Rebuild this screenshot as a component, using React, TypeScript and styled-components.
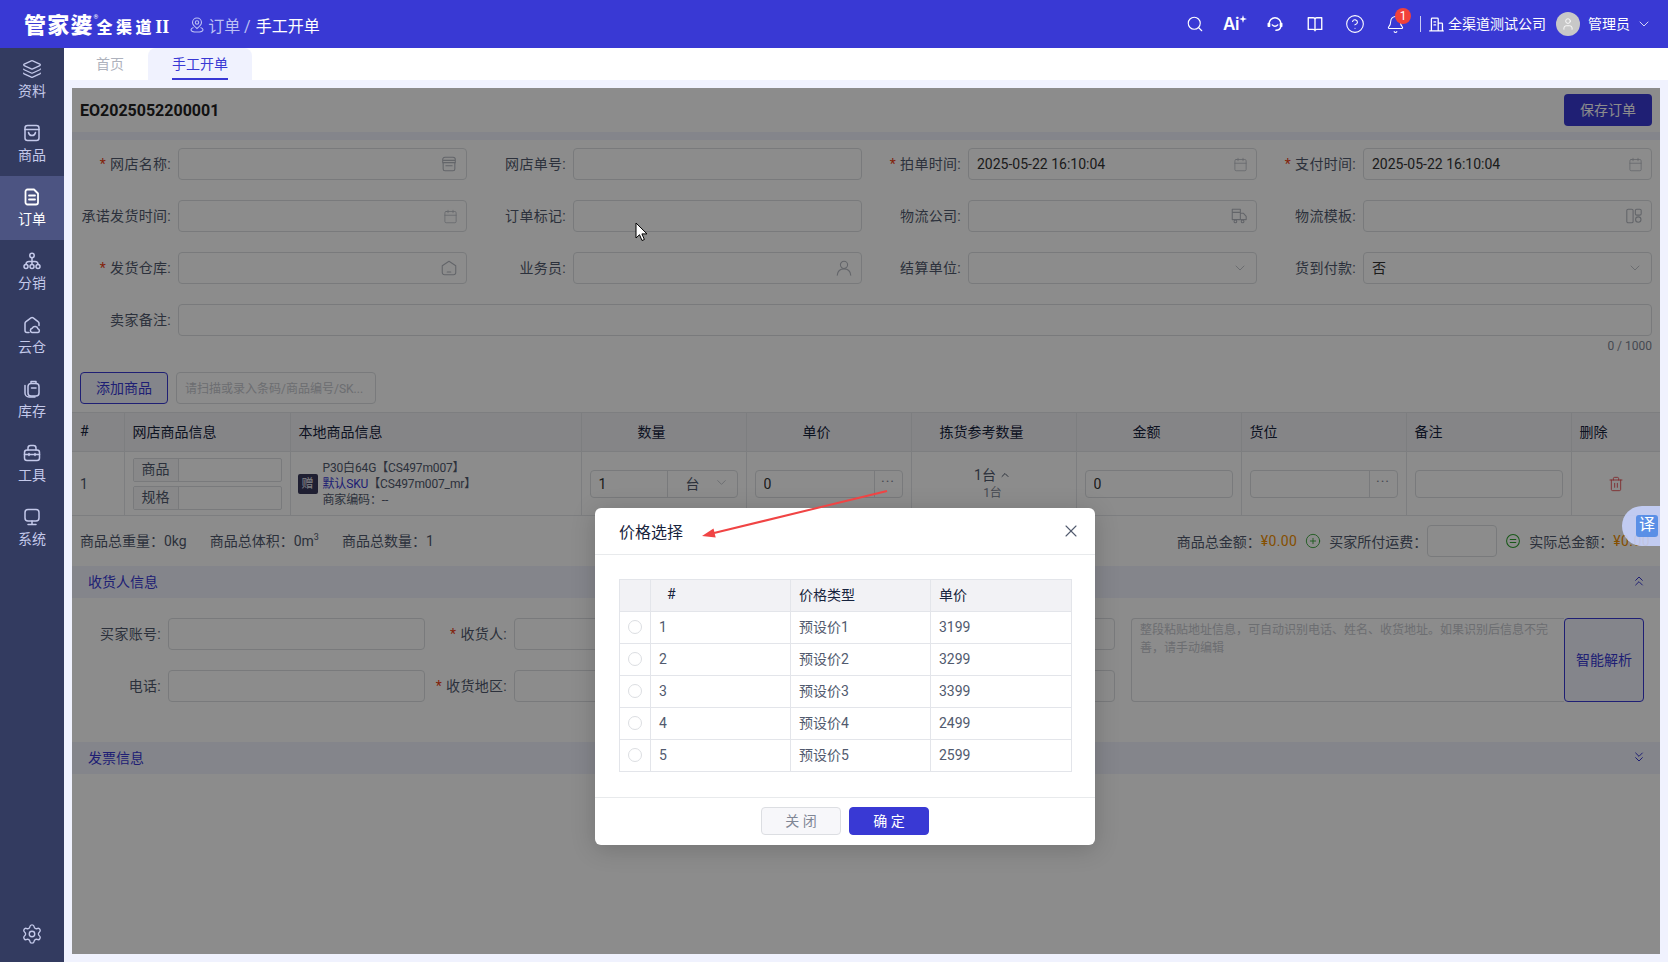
import React from "react";
import styled, { createGlobalStyle } from "styled-components";
import {
  Bell,
  Calendar,
  ChevronDown,
  ChevronUp,
  ChevronsDown,
  ChevronsUp,
  CircleHelp,
  CirclePlus,
  Layers,
  Search,
  Settings,
  Trash2,
  User,
  X,
} from "lucide-react";

const PRIMARY = "#3939d4";
const FONT = `Roboto, "Noto Sans CJK SC", sans-serif`;

const GlobalStyle = createGlobalStyle`
  html, body { margin: 0; padding: 0; height: 100%; background: #f0f2fe; }
  * { box-sizing: border-box; }
  body, input, textarea, button { font-family: ${FONT}; }
`;

const Page = styled.div`
  position: relative;
  width: 1668px;
  height: 962px;
  overflow: hidden;
  display: flex;
  flex-direction: column;
  font-size: 14px;
  color: #515a6e;
`;

/* top bar */
const TopBar = styled.header`
  flex: 0 0 48px;
  display: flex;
  align-items: center;
  padding-left: 24px;
  background: ${PRIMARY};
  color: #fff;
`;
const LogoMain = styled.span`
  margin-top: 3px;
  font-size: 22px;
  font-weight: 900;
  letter-spacing: 1.2px;
  line-height: 24px;
`;
const LogoMark = styled.span`
  align-self: flex-start;
  margin: 13px 0 0 0;
  width: 3px;
  font-size: 6px;
  line-height: 8px;
`;
const LogoSub = styled.span`
  margin: 6px 0 0 0;
  font-size: 16px;
  font-weight: 900;
  letter-spacing: 3.5px;
  line-height: 20px;
  white-space: nowrap;
`;
const LogoRoman = styled.span`
  font-family: "Liberation Serif", serif;
  font-size: 18px;
  letter-spacing: 0;
`;
const Crumbs = styled.div`
  display: flex;
  align-items: center;
  margin: 2px 0 0 21px;
  font-size: 16px;
  color: #bcc0f4;
  & svg { margin-right: 4px; }
  & b { font-weight: 400; color: #fff; margin-left: 5px; }
`;
const TopRight = styled.div`
  margin-left: auto;
  display: flex;
  align-items: center;
  padding-right: 16px;
`;
const TopIcon = styled.span`
  position: relative;
  width: 40px;
  height: 32px;
  display: flex;
  align-items: center;
  justify-content: center;
`;
const AiText = styled.span`
  font-family: Inter, sans-serif;
  font-size: 17px;
  font-weight: 600;
  letter-spacing: -0.5px;
`;
const AiSpark = styled.svg`
  align-self: flex-start;
  margin: 7px 0 0 0;
`;
const Badge = styled.span`
  position: absolute;
  left: 20px;
  top: 0;
  width: 16px;
  height: 16px;
  border-radius: 50%;
  background: #f2413a;
  color: #fff;
  font-size: 12px;
  line-height: 16px;
  text-align: center;
`;
const Divider = styled.span`
  width: 1px;
  height: 16px;
  margin: 0 7px 0 5px;
  background: #c9cbf5;
`;
const Company = styled.span`
  margin: 0 10px 0 3px;
  padding-bottom: 2px;
  white-space: nowrap;
`;
const Avatar = styled.span`
  width: 24px;
  height: 24px;
  border-radius: 50%;
  background: #c8c8c8;
  display: flex;
  align-items: center;
  justify-content: center;
  margin-right: 8px;
`;
const UserName = styled.span`
  margin-right: 6px;
  padding-bottom: 2px;
  white-space: nowrap;
`;

/* sidebar */
const Body = styled.div`
  flex: 1;
  display: flex;
  min-height: 0;
`;
const Sidebar = styled.nav`
  flex: 0 0 64px;
  display: flex;
  flex-direction: column;
  background: #333b60;
`;
const NavItem = styled.a<{ $active?: boolean }>`
  height: 64px;
  display: flex;
  flex-direction: column;
  align-items: center;
  padding-top: 11px;
  gap: 2px;
  background: ${(p) => (p.$active ? "#4c5482" : "transparent")};
  color: ${(p) => (p.$active ? "#fff" : "#c4c9ea")};
  font-size: 14px;
  line-height: 20px;
  & svg { display: block; }
`;
const GearSlot = styled.div`
  margin-top: auto;
  height: 42px;
  display: flex;
  justify-content: center;
  color: #c4c9ea;
  padding-top: 3px;
`;

/* tabs */
const Main = styled.main`
  flex: 1;
  min-width: 0;
  display: flex;
  flex-direction: column;
`;
const Tabs = styled.div`
  flex: 0 0 32px;
  display: flex;
  padding-left: 8px;
  background: #fff;
`;
const Tab = styled.div<{ $active?: boolean }>`
  width: ${(p) => (p.$active ? 104 : 76)}px;
  display: flex;
  justify-content: center;
  border-radius: 8px 8px 0 0;
  background: ${(p) => (p.$active ? "#f0f2fe" : "#fff")};
  color: ${(p) => (p.$active ? PRIMARY : "#aeb2bd")};
  & span {
    height: 32px;
    line-height: 32px;
    border-bottom: ${(p) => (p.$active ? `2px solid ${PRIMARY}` : "none")};
  }
`;
const Content = styled.div`
  flex: 1;
  padding: 8px;
  min-height: 0;
`;
const Panel = styled.section`
  position: relative;
  height: 866px;
  background: #fff;
  overflow: hidden;
`;

/* order header */
const OrderHead = styled.div`
  height: 44px;
  display: flex;
  align-items: center;
  justify-content: space-between;
  padding: 0 8px;
`;
const OrderNo = styled.h1`
  margin: 0;
  font-size: 16px;
  font-weight: 700;
  color: #222;
`;
const PrimaryBtn = styled.button`
  width: 88px;
  height: 32px;
  border: none;
  border-radius: 4px;
  background: ${PRIMARY};
  color: #fff;
  font-size: 14px;
  padding: 0 0 2px;
`;
const Strip = styled.div`
  height: 8px;
  background: #f0f2fe;
`;

/* form */
const FormGrid = styled.div`
  display: grid;
  grid-template-columns: repeat(4, 387px);
  gap: 20px 8px;
  padding: 8px 8px 0;
`;
const Field = styled.label<{ $span?: boolean; $label?: number }>`
  display: grid;
  grid-template-columns: ${(p) => p.$label ?? 98}px 1fr;
  align-items: center;
  ${(p) => (p.$span ? "grid-column: 1 / -1;" : "")}
`;
const FieldName = styled.span`
  text-align: right;
  padding: 0 7px 2px 0;
  letter-spacing: 0.3px;
  white-space: nowrap;
  color: #515a6e;
  & i {
    font-style: normal;
    color: #ed4014;
    margin-right: 4px;
  }
`;
const InputBox = styled.div<{ $h?: number; $w?: number }>`
  display: flex;
  align-items: center;
  height: ${(p) => p.$h ?? 32}px;
  ${(p) => (p.$w ? `width: ${p.$w}px;` : "")}
  border: 1px solid #dcdee2;
  border-radius: 4px;
  background: #fff;
  color: #b4b8c0;
  padding-right: 8px;
`;
const Plain = styled.input<{ $raised?: boolean }>`
  flex: 1;
  min-width: 0;
  width: 100%;
  height: 100%;
  border: none;
  outline: none;
  background: transparent;
  padding: 0 0 ${(p) => (p.$raised ? 3 : 0)}px 8px;
  font-size: 14px;
  color: #333;
  &::placeholder {
    color: #c5c8ce;
    font-size: 12px;
  }
`;
const Counter = styled.div`
  padding: 2px 8px 0;
  text-align: right;
  font-size: 12px;
  line-height: 16px;
  color: #808695;
`;
const Toolbar = styled.div`
  display: flex;
  gap: 8px;
  padding: 18px 8px 8px;
`;
const OutlineBtn = styled.button`
  width: 88px;
  height: 32px;
  padding: 0 0 2px;
  border: 1px solid ${PRIMARY};
  border-radius: 4px;
  background: #f0f2fe;
  color: ${PRIMARY};
  font-size: 14px;
`;

/* goods table */
const Grid = styled.table`
  width: 100%;
  table-layout: fixed;
  border-collapse: collapse;
`;
const Col = styled.col<{ $w: number }>`
  width: ${(p) => p.$w}px;
`;
const Th = styled.th<{ $center?: boolean }>`
  height: 39px;
  padding: ${(p) => (p.$center ? "0 24px 2px 0" : "0 8px 2px")};
  text-align: ${(p) => (p.$center ? "center" : "left")};
  font-weight: 400;
  color: #17233d;
  background: #f2f2f6;
  border: 1px solid #e3e5ea;
  border-left: none;
  &:last-child { border-right: none; }
`;
const Td = styled.td`
  height: 64px;
  padding: 0 8px;
  color: #515a6e;
  border: 1px solid #e3e5ea;
  border-left: none;
  &:last-child { border-right: none; }
`;
const AttrStack = styled.div`
  display: flex;
  flex-direction: column;
  gap: 4px;
`;
const Attr = styled.div`
  display: flex;
  height: 24px;
  border: 1px solid #dcdee2;
  border-radius: 2px;
`;
const AttrName = styled.span`
  flex: 0 0 45px;
  background: #f7f7fa;
  border-right: 1px solid #dcdee2;
  text-align: center;
  line-height: 20px;
`;
const GoodsCell = styled.div`
  display: flex;
  align-items: center;
  gap: 5px;
  margin-left: -1px;
  font-size: 12px;
  line-height: 16px;
  letter-spacing: -0.15px;
  white-space: nowrap;
`;
const GiftTag = styled.span`
  flex: 0 0 20px;
  height: 20px;
  border-radius: 2px;
  background: #3a3a5c;
  color: #e8e8f0;
  text-align: center;
  line-height: 20px;
`;
const SkuLink = styled.span`
  color: ${PRIMARY};
`;
const Suffix = styled.span`
  flex: 0 0 28px;
  align-self: stretch;
  display: flex;
  align-items: center;
  justify-content: center;
  border-left: 1px solid #dcdee2;
  margin-right: -8px;
  color: #808695;
  letter-spacing: 1px;
  padding-bottom: 3px;
`;
const UnitBox = styled.span`
  flex: 0 0 62px;
  align-self: stretch;
  display: flex;
  align-items: center;
  justify-content: space-between;
  border-left: 1px solid #dcdee2;
  padding: 0 0 2px 18px;
  color: #515a6e;
  & svg { color: #b4b8c0; }
`;
const PickCell = styled.div`
  text-align: center;
  padding-right: 2px;
  line-height: 18px;
  & small {
    display: block;
    font-size: 12px;
    color: #808695;
  }
  & svg { vertical-align: -1px; margin-left: 3px; }
`;
const TrashCell = styled.div`
  display: flex;
  justify-content: center;
  color: #e5484d;
`;

/* totals */
const Totals = styled.div`
  height: 50px;
  display: flex;
  align-items: center;
  padding: 0 8px;
  white-space: nowrap;
  & sup { font-size: 9px; line-height: 0; }
`;
const Stat = styled.span`
  margin-right: 23px;
  padding-bottom: 2px;
`;
const TotalsRight = styled.div`
  margin-left: auto;
  display: flex;
  align-items: center;
  padding-right: 2px;
`;
const Money = styled.span`
  color: #f39000;
  letter-spacing: 0.4px;
`;
const SignBadge = styled.span`
  width: 16px;
  height: 16px;
  margin: 0 8px;
  display: flex;
  align-items: center;
  justify-content: center;
  color: #2ca02c;
`;

/* sections */
const SectionBar = styled.div`
  height: 32px;
  display: flex;
  align-items: center;
  justify-content: space-between;
  padding: 0 13px 2px 16px;
  background: #f0f2fe;
  color: ${PRIMARY};
`;
const Consignee = styled.div`
  height: 144px;
  display: flex;
  padding: 20px 16px 0 8px;
`;
const ConsigneeGrid = styled.div`
  flex: 0 0 1035px;
  height: 84px;
  display: grid;
  grid-template-columns: 345px 338px 336px;
  gap: 20px 8px;
`;
const AddressBox = styled.textarea`
  flex: 0 0 433px;
  margin-left: 16px;
  height: 84px;
  padding: 2px 8px 2px 8px;
  resize: none;
  border: 1px solid #dcdee2;
  border-right: none;
  border-radius: 4px 0 0 4px;
  outline: none;
  font-size: 12px;
  line-height: 18px;
  &::placeholder { color: #c5c8ce; }
`;
const ParseBtn = styled.button`
  flex: 0 0 80px;
  height: 84px;
  padding: 0 0 2px;
  border: 1px solid ${PRIMARY};
  border-radius: 4px;
  background: #f0f2fe;
  color: ${PRIMARY};
  font-size: 14px;
`;

/* dialog */
const Mask = styled.div`
  position: absolute;
  inset: 0;
  background: rgba(0, 0, 0, 0.45);
`;
const Dialog = styled.div`
  position: absolute;
  left: 523px;
  top: 420px;
  width: 500px;
  height: 337px;
  display: flex;
  flex-direction: column;
  border-radius: 6px;
  background: #fff;
  box-shadow: 0 4px 24px rgba(0, 0, 0, 0.18);
`;
const DialogHead = styled.div`
  flex: 0 0 47px;
  display: flex;
  align-items: center;
  justify-content: space-between;
  padding: 0 14px 0 24px;
  border-bottom: 1px solid #e8eaec;
  font-size: 16px;
  color: #17233d;
  & svg { color: #515a6e; }
`;
const DialogBody = styled.div`
  flex: 1;
  padding: 24px 24px 0;
`;
const PriceTable = styled.table`
  width: 452px;
  table-layout: fixed;
  border-collapse: collapse;
`;
const PriceTh = styled.th<{ $indent?: boolean }>`
  height: 32px;
  padding: 0 0 3px ${(p) => (p.$indent ? 16 : 8)}px;
  text-align: left;
  font-weight: 400;
  color: #17233d;
  background: #f2f2f5;
  border: 1px solid #e3e5ea;
`;
const PriceTd = styled.td`
  height: 32px;
  padding: 0 0 1px 8px;
  color: #515a6e;
  border: 1px solid #e3e5ea;
`;
const NameTd = styled(PriceTd)`
  padding-bottom: 3px;
`;
const RadioTd = styled(PriceTd)`
  padding: 0 0 1px;
`;
const Radio = styled.span`
  display: block;
  width: 14px;
  height: 14px;
  margin: 0 auto;
  border: 1px solid #dcdee2;
  border-radius: 50%;
`;
const DialogFoot = styled.div`
  flex: 0 0 48px;
  display: flex;
  justify-content: center;
  gap: 8px;
  padding-top: 9px;
  border-top: 1px solid #e8eaec;
`;
const FootBtn = styled.button<{ $primary?: boolean }>`
  width: 80px;
  height: 28px;
  padding: 0 0 2px;
  border-radius: 4px;
  border: 1px solid ${(p) => (p.$primary ? PRIMARY : "#dcdee2")};
  background: ${(p) => (p.$primary ? PRIMARY : "#f7f7fa")};
  color: ${(p) => (p.$primary ? "#fff" : "#808695")};
  font-size: 14px;
`;

/* floating bits */
const TranslateTab = styled.div`
  position: absolute;
  right: 0;
  top: 418px;
  width: 38px;
  height: 40px;
  display: flex;
  align-items: center;
  padding-left: 14px;
  border-radius: 20px 0 0 20px;
  background: rgba(200, 212, 255, 0.88);
`;
const TranslateGlyph = styled.span`
  width: 22px;
  height: 22px;
  border-radius: 3px;
  background: #5a8fe6;
  color: #fff;
  font-size: 16px;
  line-height: 20px;
  text-align: center;
`;
const ArrowMark = styled.svg`
  position: absolute;
  left: 700px;
  top: 488px;
`;
const Pointer = styled.svg`
  position: absolute;
  left: 635px;
  top: 222px;
`;

const Ico = ({ children, size = 20, sw = 1.5 }: { children: React.ReactNode; size?: number; sw?: number }) => (
  <svg width={size} height={size} viewBox="0 0 20 20" fill="none" stroke="currentColor" strokeWidth={sw} strokeLinecap="round" strokeLinejoin="round">
    {children}
  </svg>
);

const BagIcon = () => (
  <Ico>
    <rect x="3" y="2.500" width="14" height="15" rx="2.500" />
    <path d="M3 6.500h14M6.500 9.500c.4 2 1.700 3 3.500 3s3.100-1 3.500-3" />
  </Ico>
);
const DocIcon = () => (
  <Ico sw={1.8}>
    <path d="M5.500 2.500h6.500l4 4v9a2 2 0 0 1-2 2H5.500a2 2 0 0 1-2-2v-11a2 2 0 0 1 2-2z" />
    <path d="M7 8.500h6M7 12.500h6" />
  </Ico>
);
const TreeIcon = () => (
  <Ico>
    <circle cx="10" cy="4.500" r="2.200" />
    <circle cx="4" cy="15.500" r="2" />
    <circle cx="10" cy="15.500" r="2" />
    <circle cx="16" cy="15.500" r="2" />
    <path d="M10 6.700v6.800M4 13.500c0-2 1-3 3-3h6c2 0 3 1 3 3" />
  </Ico>
);
const CloudHomeIcon = () => (
  <Ico>
    <path d="M7 17.500H5a2 2 0 0 1-2-2V8.500c0-.800.300-1.400 1-1.900l5-3.700c.700-.500 1.500-.500 2.200 0l4.800 3.700c.700.500 1 1.100 1 1.900v2" />
    <path d="M10 17.500a2.200 2.200 0 0 1 .300-4.300 3 3 0 0 1 5.600.600 1.900 1.900 0 0 1 0 3.700z" />
  </Ico>
);
const StockIcon = () => (
  <Ico>
    <rect x="6" y="4.500" width="11" height="12.500" rx="3" />
    <path d="M9 3.500V2.500h5v2M9.500 9h4.500M3 6.500V14a4 4 0 0 0 4 4h6" />
  </Ico>
);
const ToolboxIcon = () => (
  <Ico>
    <rect x="2.500" y="7" width="15" height="10.500" rx="2.500" />
    <path d="M6 7V5a2.500 2.500 0 0 1 2.500-2.500h3A2.500 2.500 0 0 1 14 5v2M2.500 11.500h15M7 10.500v2M13 10.500v2" />
  </Ico>
);
const ScreenIcon = () => (
  <Ico>
    <rect x="3" y="2.500" width="14" height="11.500" rx="3" />
    <path d="M10 14v3.500M6 17.500h8" />
  </Ico>
);
const PinIcon = () => (
  <svg width="14" height="16" viewBox="0 0 14 16" fill="none" stroke="currentColor" strokeWidth="1.100">
    <path d="M7 11.500C4.500 9.500 2.500 7.700 2.500 5.500a4.500 4.500 0 0 1 9 0c0 2.200-2 4-4.500 6z" />
    <circle cx="7" cy="5.500" r="1.700" />
    <path d="M3.500 10.500c-1.500.500-2.500 1.300-2.500 2.200 0 1.200 2.700 2.300 6 2.300s6-1.100 6-2.300c0-.900-1-1.700-2.500-2.200" />
  </svg>
);
const HeadsetIcon = () => (
  <Ico size={18} sw={1.600}>
    <path d="M3.500 11V9.500a6.500 6.500 0 0 1 13 0V11" />
    <path d="M2.500 9.500h1.500v3H2.500zM16 9.500h1.500v3H16z" />
    <path d="M7 11c.8 1 1.800 1.500 3 1.500s2.200-.5 3-1.500" />
    <path d="M16.500 13c-.5 2.500-2.500 4-5.500 4" />
  </Ico>
);
const BookIcon = () => (
  <Ico size={18}>
    <path d="M2.500 3h5.500c1.100 0 2 .900 2 2v12.500c0-1-.900-1.500-2-1.500H2.500zM17.500 3H12c-1.100 0-2 .900-2 2v12.500c0-1 .900-1.500 2-1.500h5.500z" />
  </Ico>
);
const BuildingIcon = () => (
  <Ico size={17}>
    <path d="M2 17.500h16M4 17.500V3.500c0-.600.400-1 1-1h6c.600 0 1 .400 1 1v14M12 8.500h4c.600 0 1 .400 1 1v8M7 7h2M7 10.500h2" />
  </Ico>
);
const StoreIcon = () => (
  <Ico size={18} sw={1.200}>
    <path d="M3.500 9v6.500a2 2 0 0 0 2 2h9a2 2 0 0 0 2-2V9" />
    <path d="M3 8.500V5a2.500 2.500 0 0 1 2.500-2.500h9A2.500 2.500 0 0 1 17 5v3.500zM3 6h14M6.500 12h7" />
  </Ico>
);
const TruckIcon = () => (
  <Ico size={18} sw={1.200}>
    <path d="M2.500 2.500h9v11.500h-9zM2.500 6h9M11.500 7h3.500l3 3.500V14h-6.500" />
    <circle cx="6" cy="16" r="1.500" />
    <circle cx="14" cy="16" r="1.500" />
  </Ico>
);
const LayoutIcon = () => (
  <Ico size={18} sw={1.200}>
    <rect x="2" y="2.500" width="7" height="15" rx="1.500" />
    <rect x="11.500" y="2.500" width="6.500" height="6.500" rx="1.500" />
    <circle cx="14.750" cy="14" r="3" />
  </Ico>
);
const DepotIcon = () => (
  <Ico size={18} sw={1.200}>
    <path d="M2.500 7.500 10 2.500l7.500 5v7.500a2.500 2.500 0 0 1-2.500 2.500H5A2.500 2.500 0 0 1 2.500 15zM8 14.500h4" />
  </Ico>
);
const PersonIcon = () => (
  <Ico size={18} sw={1.200}>
    <circle cx="10" cy="6.500" r="4" />
    <path d="M2.500 18c.500-4.500 3.500-7 7.500-7s7 2.500 7.500 7" />
  </Ico>
);

const NAV = [
  { label: "资料", icon: <Layers size={20} strokeWidth={1.5} /> },
  { label: "商品", icon: <BagIcon /> },
  { label: "订单", icon: <DocIcon />, active: true },
  { label: "分销", icon: <TreeIcon /> },
  { label: "云仓", icon: <CloudHomeIcon /> },
  { label: "库存", icon: <StockIcon /> },
  { label: "工具", icon: <ToolboxIcon /> },
  { label: "系统", icon: <ScreenIcon /> },
];

const CalendarIcon = () => <Calendar size={15} strokeWidth={1.200} />;
const Chevron = () => <ChevronDown size={16} strokeWidth={1.200} />;

type FormField = {
  label: string;
  required?: boolean;
  value?: string;
  suffix?: React.ReactNode;
  raised?: boolean;
};

const FORM_FIELDS: FormField[] = [
  { label: "网店名称:", required: true, suffix: <StoreIcon /> },
  { label: "网店单号:" },
  { label: "拍单时间:", required: true, value: "2025-05-22 16:10:04", suffix: <CalendarIcon /> },
  { label: "支付时间:", required: true, value: "2025-05-22 16:10:04", suffix: <CalendarIcon /> },
  { label: "承诺发货时间:", suffix: <CalendarIcon /> },
  { label: "订单标记:" },
  { label: "物流公司:", suffix: <TruckIcon /> },
  { label: "物流模板:", suffix: <LayoutIcon /> },
  { label: "发货仓库:", required: true, suffix: <DepotIcon /> },
  { label: "业务员:", suffix: <PersonIcon /> },
  { label: "结算单位:", suffix: <Chevron /> },
  { label: "货到付款:", value: "否", suffix: <Chevron />, raised: true },
];

const GOODS_COLS = [52, 166, 291, 165, 165, 165, 165, 165, 165, 89];
const PRICE_COLS = [31, 140, 140, 141];
const PRICES = [
  { id: 1, name: "预设价1", price: "3199" },
  { id: 2, name: "预设价2", price: "3299" },
  { id: 3, name: "预设价3", price: "3399" },
  { id: 4, name: "预设价4", price: "2499" },
  { id: 5, name: "预设价5", price: "2599" },
];

const Label = ({ text, required }: { text: string; required?: boolean }) => (
  <FieldName>
    {required && <i>*</i>}
    {text}
  </FieldName>
);

const App = () => (
  <Page>
    <GlobalStyle />
    <TopBar>
      <LogoMain>管家婆</LogoMain>
      <LogoMark>®</LogoMark>
      <LogoSub>
        全渠道<LogoRoman>II</LogoRoman>
      </LogoSub>
      <Crumbs>
        <PinIcon />
        订单 / <b>手工开单</b>
      </Crumbs>
      <TopRight>
        <TopIcon><Search size={18} strokeWidth={1.500} /></TopIcon>
        <TopIcon>
          <AiText>Ai</AiText>
          <AiSpark width="8" height="8" viewBox="0 0 8 8" fill="currentColor"><path d="M4 0l.9 3.100L8 4l-3.100.9L4 8l-.9-3.100L0 4l3.100-.9z" /></AiSpark>
        </TopIcon>
        <TopIcon><HeadsetIcon /></TopIcon>
        <TopIcon><BookIcon /></TopIcon>
        <TopIcon><CircleHelp size={20} strokeWidth={1.300} /></TopIcon>
        <TopIcon>
          <Bell size={19} strokeWidth={1.300} />
          <Badge>1</Badge>
        </TopIcon>
        <Divider />
        <BuildingIcon />
        <Company>全渠道测试公司</Company>
        <Avatar><User size={14} strokeWidth={1.500} /></Avatar>
        <UserName>管理员</UserName>
        <ChevronDown size={16} strokeWidth={1.200} />
      </TopRight>
    </TopBar>

    <Body>
      <Sidebar>
        {NAV.map((n) => (
          <NavItem key={n.label} $active={n.active}>
            {n.icon}
            {n.label}
          </NavItem>
        ))}
        <GearSlot><Settings size={22} strokeWidth={1.500} /></GearSlot>
      </Sidebar>

      <Main>
        <Tabs>
          <Tab><span>首页</span></Tab>
          <Tab $active><span>手工开单</span></Tab>
        </Tabs>
        <Content>
          <Panel>
            <OrderHead>
              <OrderNo>EO2025052200001</OrderNo>
              <PrimaryBtn>保存订单</PrimaryBtn>
            </OrderHead>
            <Strip />

            <FormGrid>
              {FORM_FIELDS.map((f) => (
                <Field key={f.label}>
                  <Label text={f.label} required={f.required} />
                  <InputBox>
                    <Plain readOnly value={f.value ?? ""} $raised={f.raised} />
                    {f.suffix}
                  </InputBox>
                </Field>
              ))}
              <Field $span>
                <Label text="卖家备注:" />
                <InputBox><Plain readOnly value="" /></InputBox>
              </Field>
            </FormGrid>
            <Counter>0 / 1000</Counter>

            <Toolbar>
              <OutlineBtn>添加商品</OutlineBtn>
              <InputBox $w={200}>
                <Plain readOnly placeholder="请扫描或录入条码/商品编号/SK..." />
              </InputBox>
            </Toolbar>

            <Grid>
              <colgroup>
                {GOODS_COLS.map((w, i) => <Col key={i} $w={w} />)}
              </colgroup>
              <thead>
                <tr>
                  <Th>#</Th>
                  <Th>网店商品信息</Th>
                  <Th>本地商品信息</Th>
                  <Th $center>数量</Th>
                  <Th $center>单价</Th>
                  <Th $center>拣货参考数量</Th>
                  <Th $center>金额</Th>
                  <Th>货位</Th>
                  <Th>备注</Th>
                  <Th>删除</Th>
                </tr>
              </thead>
              <tbody>
                <tr>
                  <Td>1</Td>
                  <Td>
                    <AttrStack>
                      <Attr><AttrName>商品</AttrName></Attr>
                      <Attr><AttrName>规格</AttrName></Attr>
                    </AttrStack>
                  </Td>
                  <Td>
                    <GoodsCell>
                      <GiftTag>赠</GiftTag>
                      <div>
                        <div>P30白64G【CS497m007】</div>
                        <div><SkuLink>默认SKU</SkuLink>【CS497m007_mr】</div>
                        <div>商家编码：--</div>
                      </div>
                    </GoodsCell>
                  </Td>
                  <Td>
                    <InputBox $h={28}>
                      <Plain readOnly value="1" />
                      <UnitBox>台<ChevronDown size={15} strokeWidth={1.200} /></UnitBox>
                    </InputBox>
                  </Td>
                  <Td>
                    <InputBox $h={28}>
                      <Plain readOnly value="0" />
                      <Suffix>···</Suffix>
                    </InputBox>
                  </Td>
                  <Td>
                    <PickCell>
                      1台<ChevronUp size={12} strokeWidth={2} />
                      <small>1台</small>
                    </PickCell>
                  </Td>
                  <Td>
                    <InputBox $h={28}><Plain readOnly value="0" /></InputBox>
                  </Td>
                  <Td>
                    <InputBox $h={28}>
                      <Plain readOnly value="" />
                      <Suffix>···</Suffix>
                    </InputBox>
                  </Td>
                  <Td>
                    <InputBox $h={28}><Plain readOnly value="" /></InputBox>
                  </Td>
                  <Td>
                    <TrashCell><Trash2 size={16} strokeWidth={1.300} /></TrashCell>
                  </Td>
                </tr>
              </tbody>
            </Grid>

            <Totals>
              <Stat>商品总重量：0kg</Stat>
              <Stat>商品总体积：0m<sup>3</sup></Stat>
              <Stat>商品总数量：1</Stat>
              <TotalsRight>
                商品总金额：
                <Money>¥0.00</Money>
                <SignBadge><CirclePlus size={16} strokeWidth={1.300} /></SignBadge>
                买家所付运费：
                <InputBox $w={70}><Plain readOnly value="" /></InputBox>
                <SignBadge>
                  <Ico size={16} sw={1.300}>
                    <circle cx="10" cy="10" r="8" />
                    <path d="M6.500 8h7M6.500 12h7" />
                  </Ico>
                </SignBadge>
                实际总金额：
                <Money>¥0.00</Money>
              </TotalsRight>
            </Totals>

            <SectionBar>
              收货人信息
              <ChevronsUp size={16} strokeWidth={1.500} />
            </SectionBar>
            <Consignee>
              <ConsigneeGrid>
                <Field $label={88}>
                  <Label text="买家账号:" />
                  <InputBox><Plain readOnly value="" /></InputBox>
                </Field>
                <Field $label={81}>
                  <Label text="收货人:" required />
                  <InputBox><Plain readOnly value="" /></InputBox>
                </Field>
                <Field $label={79}>
                  <span />
                  <InputBox><Plain readOnly value="" /></InputBox>
                </Field>
                <Field $label={88}>
                  <Label text="电话:" />
                  <InputBox><Plain readOnly value="" /></InputBox>
                </Field>
                <Field $label={81}>
                  <Label text="收货地区:" required />
                  <InputBox><Plain readOnly value="" /></InputBox>
                </Field>
                <Field $label={79}>
                  <span />
                  <InputBox><Plain readOnly value="" /></InputBox>
                </Field>
              </ConsigneeGrid>
              <AddressBox readOnly placeholder="整段粘贴地址信息，可自动识别电话、姓名、收货地址。如果识别后信息不完善，请手动编辑" />
              <ParseBtn>智能解析</ParseBtn>
            </Consignee>

            <SectionBar>
              发票信息
              <ChevronsDown size={16} strokeWidth={1.500} />
            </SectionBar>

            <Mask />
            <Dialog>
              <DialogHead>
                价格选择
                <X size={20} strokeWidth={1.300} />
              </DialogHead>
              <DialogBody>
                <PriceTable>
                  <colgroup>
                    {PRICE_COLS.map((w, i) => <Col key={i} $w={w} />)}
                  </colgroup>
                  <thead>
                    <tr>
                      <PriceTh />
                      <PriceTh $indent>#</PriceTh>
                      <PriceTh>价格类型</PriceTh>
                      <PriceTh>单价</PriceTh>
                    </tr>
                  </thead>
                  <tbody>
                    {PRICES.map((p) => (
                      <tr key={p.id}>
                        <RadioTd><Radio /></RadioTd>
                        <PriceTd>{p.id}</PriceTd>
                        <NameTd>{p.name}</NameTd>
                        <PriceTd>{p.price}</PriceTd>
                      </tr>
                    ))}
                  </tbody>
                </PriceTable>
              </DialogBody>
              <DialogFoot>
                <FootBtn>关 闭</FootBtn>
                <FootBtn $primary>确 定</FootBtn>
              </DialogFoot>
            </Dialog>
            <TranslateTab><TranslateGlyph>译</TranslateGlyph></TranslateTab>
          </Panel>
        </Content>
      </Main>
    </Body>

    <ArrowMark width="190" height="52" viewBox="0 0 190 52">
      <path d="M187 3 14 45" stroke="#f04444" strokeWidth="2" fill="none" />
      <path d="M2 48 13.500 40.600 15.700 49.400z" fill="#f04444" />
    </ArrowMark>
    <Pointer width="13" height="20" viewBox="0 0 13 20">
      <path d="M1 1v15l3.500-3.300 2.500 5.800 2.400-1-2.500-5.600H12z" fill="#fff" stroke="#000" strokeWidth="1" />
    </Pointer>
  </Page>
);

export default App;
